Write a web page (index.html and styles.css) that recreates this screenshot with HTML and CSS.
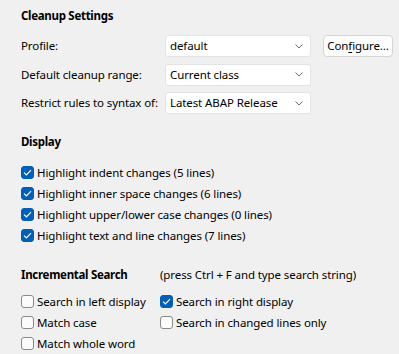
FILE: index.html
```html
<!DOCTYPE html>
<html>
<head>
<meta charset="utf-8">
<link rel="stylesheet" href="styles.css">
</head>
<body>
<div class="page">
  <div class="heading h-cleanup">Cleanup Settings</div>
  <div class="form">
    <div class="label">Profile:</div>
    <div class="combo"><span>default</span><svg class="chev" width="8" height="5" viewBox="0 0 8 5"><path d="M0.5 0.5 L4 4 L7.5 0.5" fill="none" stroke="#6b6b6b" stroke-width="1"/></svg></div>
    <div class="button">Con<u>f</u>igure...</div>
    <div class="label">Default cleanup range:</div>
    <div class="combo"><span>Current class</span><svg class="chev" width="8" height="5" viewBox="0 0 8 5"><path d="M0.5 0.5 L4 4 L7.5 0.5" fill="none" stroke="#6b6b6b" stroke-width="1"/></svg></div>
    <div></div>
    <div class="label">Restrict rules to syntax of:</div>
    <div class="combo"><span>Latest ABAP Release</span><svg class="chev" width="8" height="5" viewBox="0 0 8 5"><path d="M0.5 0.5 L4 4 L7.5 0.5" fill="none" stroke="#6b6b6b" stroke-width="1"/></svg></div>
    <div></div>
  </div>

  <div class="heading h-display">Display</div>
  <div class="checks">
    <div class="check"><span class="box on"><svg width="9" height="7" viewBox="0 0 9 7"><path d="M1 3.6 L3.4 5.8 L8 1.2" fill="none" stroke="#fff" stroke-width="1.2"/></svg></span>Highlight indent changes (5 lines)</div>
    <div class="check"><span class="box on"><svg width="9" height="7" viewBox="0 0 9 7"><path d="M1 3.6 L3.4 5.8 L8 1.2" fill="none" stroke="#fff" stroke-width="1.2"/></svg></span>Highlight inner space changes (6 lines)</div>
    <div class="check"><span class="box on"><svg width="9" height="7" viewBox="0 0 9 7"><path d="M1 3.6 L3.4 5.8 L8 1.2" fill="none" stroke="#fff" stroke-width="1.2"/></svg></span>Highlight upper/lower case changes (0 lines)</div>
    <div class="check"><span class="box on"><svg width="9" height="7" viewBox="0 0 9 7"><path d="M1 3.6 L3.4 5.8 L8 1.2" fill="none" stroke="#fff" stroke-width="1.2"/></svg></span>Highlight text and line changes (7 lines)</div>
  </div>

  <div class="search-head">
    <div class="heading">Incremental Search</div>
    <div class="hint">(press Ctrl + F and type search string)</div>
  </div>
  <div class="search-grid">
    <div class="check"><span class="box"></span>Search in left display</div>
    <div class="check"><span class="box on"><svg width="9" height="7" viewBox="0 0 9 7"><path d="M1 3.6 L3.4 5.8 L8 1.2" fill="none" stroke="#fff" stroke-width="1.2"/></svg></span>Search in right display</div>
    <div class="check"><span class="box"></span>Match case</div>
    <div class="check"><span class="box"></span>Search in changed lines only</div>
    <div class="check"><span class="box"></span>Match whole word</div>
  </div>
</div>
</body>
</html>
```
FILE: styles.css
```css
html, body {
  margin: 0;
  padding: 0;
  background: #f0f0f0;
}
body {
  font-family: "Noto Sans", "Open Sans", sans-serif;
  font-size: 11.5px;
  letter-spacing: -0.1px;
  color: #000;
  width: 399px;
  height: 354px;
  overflow: hidden;
}
.page {
  padding: 8px 0 0 21px;
}
.heading {
  font-weight: bold;
  letter-spacing: -0.3px;
  line-height: 16px;
  height: 16px;
  white-space: nowrap;
}
.form {
  margin-top: 11px;
  display: grid;
  grid-template-columns: 144px 146px 70px;
  grid-auto-rows: 22px;
  row-gap: 6.5px;
  column-gap: 0;
}
.label {
  line-height: 22px;
  white-space: nowrap;
}
.combo {
  box-sizing: border-box;
  background: #fff;
  border: 1px solid #e3e3e3;
  border-radius: 3px;
  display: flex;
  align-items: center;
  justify-content: space-between;
  padding: 0 7px 0 4px;
  line-height: 20px;
  white-space: nowrap;
}
.chev {
  display: block;
}
.button {
  box-sizing: border-box;
  margin-left: 12px;
  width: 70px;
  background: #fdfdfd;
  border: 1px solid #d5d5d5;
  border-radius: 4px;
  text-align: center;
  line-height: 20px;
  white-space: nowrap;
}
.button u {
  text-decoration-thickness: 1px;
  text-underline-offset: 2px;
}
.h-display {
  margin-top: 20px;
}
.checks {
  margin-top: 12px;
}
.check {
  display: flex;
  align-items: center;
  height: 21px;
  white-space: nowrap;
}
.box {
  box-sizing: border-box;
  width: 13px;
  height: 13px;
  border: 1px solid #8a8a8a;
  border-radius: 3px;
  background: #fbfbfb;
  margin-right: 3px;
  flex: none;
  display: flex;
  align-items: center;
  justify-content: center;
}
.box.on {
  background: #005fb8;
  border-color: #005fb8;
}
.box svg {
  display: block;
}
.search-head {
  margin-top: 21px;
  display: grid;
  grid-template-columns: 139px auto;
}
.hint {
  line-height: 16px;
  white-space: nowrap;
}
.search-grid {
  margin-top: 8px;
  display: grid;
  grid-template-columns: 139px auto;
}
```
